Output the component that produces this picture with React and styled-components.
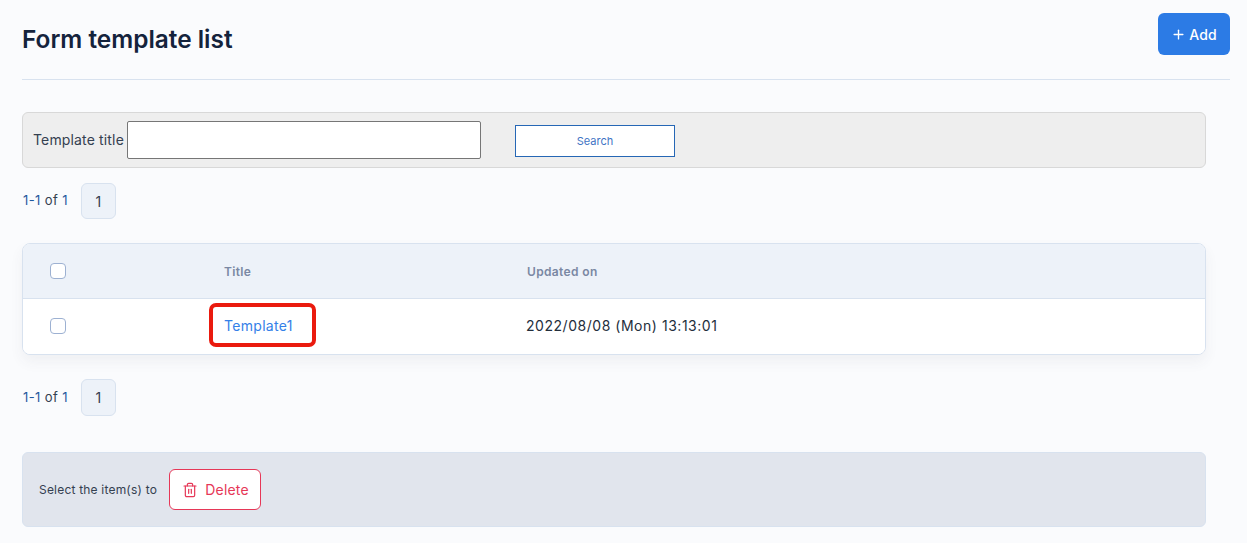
import { createGlobalStyle, styled } from "styled-components";
import { Plus, Trash2 } from "lucide-react";

const GlobalStyle = createGlobalStyle`
  html, body {
    margin: 0;
    background: #fafbfd;
    font-family: "Inter", "Noto Sans", sans-serif;
    color: #12263f;
  }
`;

const Page = styled.div`
  width: 1247px;
  height: 543px;
  overflow: hidden;
  box-sizing: border-box;
  padding: 13px 17px 0 22px;
`;
const Header = styled.div`
  display: flex;
  justify-content: space-between;
  align-items: flex-start;
  height: 66px;
  border-bottom: 1px solid #d8e2ef;
`;
const Title = styled.h1`
  margin: 9px 0 0;
  font-size: 24.4px;
  line-height: 34px;
  font-weight: 600;
  color: #14233c;
`;
const AddButton = styled.button`
  display: flex;
  align-items: center;
  justify-content: center;
  gap: 3px;
  width: 72px;
  height: 42px;
  padding: 0;
  border: 0;
  border-radius: 6px;
  background: #2c7be5;
  color: #fff;
  font: 500 14px "Inter", sans-serif;
  letter-spacing: 0.2px;
`;
const Content = styled.div`
  width: 1184px;
`;
const SearchPanel = styled.div`
  display: flex;
  align-items: center;
  box-sizing: border-box;
  height: 56px;
  margin-top: 32px;
  padding-left: 10px;
  background: #eeeeee;
  border: 1px solid #d8d8d8;
  border-radius: 6px;
`;
const SearchLabel = styled.label`
  padding-bottom: 2px;
  margin-right: 3px;
  font-size: 14px;
  letter-spacing: 0.15px;
  color: #344050;
`;
const SearchInput = styled.input`
  box-sizing: border-box;
  width: 354px;
  height: 38px;
  background: #fff;
  border: 1px solid #767676;
  border-radius: 2px;
`;
const SearchButton = styled.button`
  box-sizing: border-box;
  width: 160px;
  height: 32px;
  margin: 2px 0 0 34px;
  background: #fff;
  border: 1px solid #2667b5;
  color: #3f74c4;
  font: 400 11px "Inter", sans-serif;
`;
const Pager = styled.div`
  display: flex;
  align-items: center;
  gap: 12px;
  margin-top: ${(p) => p.$top}px;
  padding-left: 1px;
  font-size: 13px;
  letter-spacing: 0.4px;
  color: #344050;
`;
const PagerCount = styled.span`
  width: 46px;
  padding-bottom: 2px;
  white-space: nowrap;
`;
const PagerLink = styled.span`
  color: #1f5a9e;
`;
const PageNumber = styled.div`
  display: flex;
  align-items: center;
  justify-content: center;
  box-sizing: border-box;
  width: 35px;
  height: ${(p) => p.$height}px;
  background: #edf2f9;
  border: 1px solid #d8e2ef;
  border-radius: 6px;
  font-size: 14px;
  color: #344050;
`;
const Table = styled.div`
  margin-top: 24px;
  background: #fff;
  border: 1px solid #d8e2ef;
  border-radius: 8px;
  box-shadow: 0 7px 14px rgba(65, 69, 88, 0.06);
  overflow: hidden;
`;
const HeadRow = styled.div`
  display: grid;
  grid-template-columns: 201px 303px 1fr;
  align-items: center;
  height: 54px;
  background: #edf2f9;
  border-bottom: 1px solid #d8e2ef;
`;
const BodyRow = styled.div`
  display: grid;
  grid-template-columns: 201px 303px 1fr;
  align-items: center;
  height: 53px;
  padding-bottom: 2px;
  background: #fff;
`;
const CheckCell = styled.div`
  display: flex;
  padding-left: 27px;
`;
const Check = styled.span`
  display: block;
  box-sizing: border-box;
  width: 16px;
  height: 16px;
  background: #fff;
  border: 1px solid #9db1d2;
  border-radius: 4px;
`;
const HeadCell = styled.div`
  font-size: 12px;
  font-weight: 600;
  letter-spacing: 0.35px;
  color: #7a88a3;
`;
const LinkCell = styled.div`
  position: relative;
  font-size: 14px;
  letter-spacing: 0.3px;
  color: #3480e8;
`;
const Highlight = styled.span`
  position: absolute;
  left: -15px;
  top: -14px;
  box-sizing: border-box;
  width: 107px;
  height: 44px;
  border: 4px solid #ea1a0e;
  border-radius: 7px;
`;
const TextCell = styled.div`
  margin-left: -1px;
  font-size: 14px;
  letter-spacing: 0.53px;
  color: #232e3c;
`;
const BulkBar = styled.div`
  display: flex;
  align-items: center;
  box-sizing: border-box;
  height: 75px;
  margin-top: 36px;
  padding-left: 16px;
  gap: 12px;
  background: #e1e5ed;
  border: 1px solid #d8e2ef;
  border-radius: 6px;
  font-size: 12px;
  letter-spacing: 0.2px;
  color: #344050;
`;
const DeleteButton = styled.button`
  display: flex;
  align-items: center;
  justify-content: center;
  gap: 7px;
  box-sizing: border-box;
  width: 92px;
  height: 41px;
  padding: 0 0 0 1px;
  background: #fff;
  border: 1px solid #e63757;
  border-radius: 6px;
  color: #e63757;
  font: 400 14px "Inter", sans-serif;
  letter-spacing: 0.2px;
`;

function Pagination({ top, height }) {
  return (
    <Pager $top={top}>
      <PagerCount>
        <PagerLink>1-1</PagerLink> of <PagerLink>1</PagerLink>
      </PagerCount>
      <PageNumber $height={height}>1</PageNumber>
    </Pager>
  );
}

export default function App() {
  return (
    <Page>
      <GlobalStyle />
      <Header>
        <Title>Form template list</Title>
        <AddButton>
          <Plus size={15} strokeWidth={2.2} />
          Add
        </AddButton>
      </Header>
      <Content>
        <SearchPanel>
          <SearchLabel>Template title</SearchLabel>
          <SearchInput />
          <SearchButton>Search</SearchButton>
        </SearchPanel>
        <Pagination top={15} height={36} />
        <Table>
          <HeadRow>
            <CheckCell>
              <Check />
            </CheckCell>
            <HeadCell>Title</HeadCell>
            <HeadCell>Updated on</HeadCell>
          </HeadRow>
          <BodyRow>
            <CheckCell>
              <Check />
            </CheckCell>
            <LinkCell>
              Template1
              <Highlight />
            </LinkCell>
            <TextCell>2022/08/08 (Mon) 13:13:01</TextCell>
          </BodyRow>
        </Table>
        <Pagination top={24} height={37} />
        <BulkBar>
          Select the item(s) to
          <DeleteButton>
            <Trash2 size={16} strokeWidth={1.8} />
            Delete
          </DeleteButton>
        </BulkBar>
      </Content>
    </Page>
  );
}
